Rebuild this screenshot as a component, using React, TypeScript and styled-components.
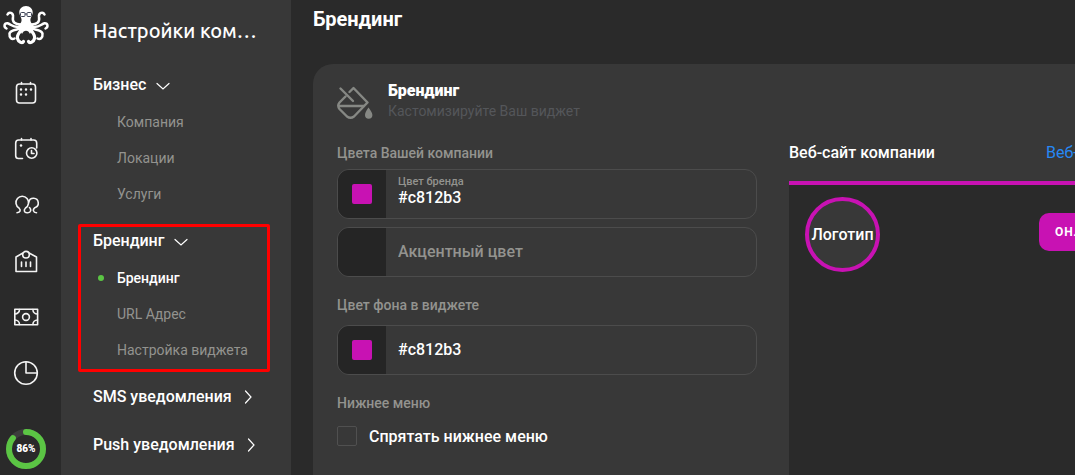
import React from "react";
import styled, { createGlobalStyle, css } from "styled-components";

const brand = "#c812b3";

const GlobalStyle = createGlobalStyle`
  *, *::before, *::after { box-sizing: border-box; }
  body {
    margin: 0;
    height: 100vh;
    overflow: hidden;
    background: #2a2a2a;
    color: #fff;
    font-family: Roboto, "Liberation Sans", sans-serif;
    font-size: 16px;
  }
  button, input { font: inherit; color: inherit; }
  h1, h2, p, ul { margin: 0; padding: 0; }
  ul { list-style: none; }
`;

const Shell = styled.div`
  display: flex;
  height: 100vh;
  overflow: hidden;
`;

const Rail = styled.nav`
  flex: 0 0 61px;
  display: flex;
  flex-direction: column;
  align-items: center;
  padding-right: 9px;
`;

const Logo = styled.a`
  display: block;
  height: 65px;
  padding-top: 4px;
`;

const RailButton = styled.button`
  flex: 0 0 56px;
  width: 52px;
  display: flex;
  align-items: center;
  justify-content: center;
  padding: 0;
  border: 0;
  background: none;
  cursor: pointer;
  svg {
    width: 26px;
    height: 26px;
    fill: none;
    stroke: #f4f4f4;
    stroke-width: 1.6;
    stroke-linecap: round;
    stroke-linejoin: round;
  }
`;

const Progress = styled.div`
  flex: none;
  margin-top: 28px;
  width: 40px;
  height: 40px;
  display: grid;
  place-items: center;
  > * { grid-area: 1 / 1; }
`;

const ProgressValue = styled.span`
  font-size: 10px;
  line-height: 12px;
  font-weight: 900;
`;

const SideMenu = styled.aside`
  flex: 0 0 230px;
  padding: 0 32px;
  background: #383838;
`;

const MenuTitle = styled.h2`
  height: 64px;
  line-height: 62px;
  font-family: Ubuntu, "Noto Sans", sans-serif;
  font-size: 20px;
  font-weight: 500;
  white-space: nowrap;
`;

const Groups = styled.div`
  display: flex;
  flex-direction: column;
  gap: 8px;
`;

const Group = styled.section<{ $marked?: boolean }>`
  position: relative;
  ${(p) =>
    p.$marked &&
    css`
      &::after {
        content: "";
        position: absolute;
        inset: 4px -11px -4px -15px;
        border: 3px solid #ff0000;
        border-radius: 2px;
        pointer-events: none;
      }
    `}
`;

const GroupButton = styled.button`
  display: flex;
  align-items: center;
  gap: 8px;
  height: 40px;
  padding: 0;
  border: 0;
  background: none;
  font-weight: 500;
  white-space: nowrap;
  cursor: pointer;
  svg {
    width: 16px;
    height: 16px;
    fill: none;
    stroke: #fff;
    stroke-width: 1.2;
    stroke-linecap: round;
  }
`;

const SubLink = styled.a<{ $active?: boolean }>`
  display: flex;
  align-items: center;
  height: 36px;
  padding-left: 24px;
  font-size: 14px;
  color: ${(p) => (p.$active ? "#fff" : "#93938f")};
  font-weight: ${(p) => (p.$active ? 500 : 400)};
  text-decoration: none;
  white-space: nowrap;
  ${(p) =>
    p.$active &&
    css`
      padding-left: 5px;
      gap: 13px;
      &::before {
        content: "";
        width: 6px;
        height: 6px;
        border-radius: 50%;
        background: #5bc544;
      }
    `}
`;

const Main = styled.main`
  flex: 1;
  min-width: 0;
  padding-left: 22px;
  overflow: hidden;
`;

const PageTitle = styled.h1`
  height: 64px;
  padding-top: 7px;
  font-size: 20px;
  line-height: 24px;
  font-weight: 700;
`;

const Card = styled.div`
  min-width: 960px;
  min-height: calc(100vh - 64px);
  padding: 16px 24px 24px;
  border-radius: 20px;
  background: #383838;
`;

const CardHeader = styled.header`
  display: flex;
  align-items: center;
  gap: 15px;
  height: 41px;
`;

const CardTitle = styled.h2`
  font-size: 16px;
  line-height: 20px;
  font-weight: 900;
`;

const CardHint = styled.p`
  font-size: 14px;
  line-height: 20px;
  color: #54565a;
`;

const Columns = styled.div`
  display: grid;
  grid-template-columns: 420px 1fr;
  gap: 32px;
  padding-top: 24px;
`;

const Form = styled.form`
  display: flex;
  flex-direction: column;
  gap: 20px;
`;

const Fieldset = styled.div<{ $tight?: boolean }>`
  display: flex;
  flex-direction: column;
  gap: ${(p) => (p.$tight ? 8 : 12)}px;
`;

const Caption = styled.div`
  font-size: 14px;
  line-height: 16px;
  font-weight: 500;
  color: #93938f;
`;

const ColorBox = styled.label`
  display: flex;
  height: 50px;
  border: 1px solid #4c4c4c;
  border-radius: 12px;
  overflow: hidden;
`;

const Swatch = styled.span<{ $color?: string }>`
  flex: 0 0 48px;
  display: grid;
  place-items: center;
  background: #252525;
  &::before {
    content: "";
    width: 20px;
    height: 20px;
    border-radius: 2px;
    background: ${(p) => p.$color || "transparent"};
  }
`;

const FieldBody = styled.span<{ $floating: boolean }>`
  flex: 1;
  display: flex;
  flex-direction: column;
  justify-content: center;
  padding: 0 12px ${(p) => (p.$floating ? 5 : 2)}px;
`;

const FloatLabel = styled.span`
  font-size: 11px;
  line-height: 12px;
  font-weight: 500;
  color: #93938f;
`;

const ColorInput = styled.input`
  width: 100%;
  height: 20px;
  padding: 0;
  border: 0;
  outline: 0;
  background: none;
  font-weight: 500;
  &::placeholder { color: #93938f; opacity: 1; }
`;

const CheckRow = styled.label`
  display: flex;
  align-items: center;
  gap: 12px;
  height: 26px;
  font-weight: 500;
`;

const CheckBox = styled.input`
  appearance: none;
  width: 20px;
  height: 20px;
  margin: 0;
  border: 1px solid #505050;
  border-radius: 2px;
  &:checked { background: ${brand}; }
`;

const PreviewHeader = styled.div`
  display: flex;
  gap: 111px;
  height: 36px;
  line-height: 16px;
  white-space: nowrap;
`;

const PreviewTitle = styled.span`
  font-weight: 500;
`;

const SiteLink = styled.a`
  color: #2688f5;
  text-decoration: none;
`;

const Preview = styled.div`
  display: flex;
  align-items: flex-start;
  gap: 159px;
  min-height: 400px;
  padding: 12px 16px;
  border-top: 4px solid ${brand};
  background: #2a2a2a;
`;

const LogoCircle = styled.div`
  flex: 0 0 75px;
  height: 75px;
  display: flex;
  align-items: center;
  justify-content: center;
  border: 4px solid ${brand};
  border-radius: 50%;
  background: #383838;
  font-weight: 500;
`;

const BookButton = styled.button`
  flex: none;
  height: 38px;
  margin-top: 16px;
  padding: 0 16px;
  border: 0;
  border-radius: 10px;
  background: ${brand};
  font-size: 12px;
  font-weight: 700;
  letter-spacing: 1px;
  white-space: nowrap;
`;

const Octopus = () => (
  <svg width="48" height="42" viewBox="2 4 48 42" role="img" aria-label="Осьминог">
    <g fill="none" stroke="#fff" strokeLinecap="round" strokeLinejoin="round" strokeWidth="2.500">
      <path d="M22 24.500C15 25 12 22 13 17C13.600 12.500 9 11.500 7.500 14.500" />
      <path d="M30 24.500C37 25 40 22 39 17C38.400 12.500 43 11.500 44.500 14.500" />
      <path d="M21 26.500C13 28.500 11 24 7.500 23.200C4 23 3.500 27 6.500 28.500" />
      <path d="M31 26.500C39 28.500 41 24 44.500 23.200C48 23 48.500 27 45.500 28.500" />
      <path d="M21 28C17 30.500 11 29 9.500 33.500C9 38 12 40 14.500 38.500" />
      <path d="M31 28C35 30.500 41 29 42.500 33.500C43 38 40 40 37.500 38.500" />
      <path strokeWidth="3.200" d="M22.500 28C20 32.500 16.500 34.500 17.500 38.500C18.500 42.500 22.500 43.500 23.500 41.500" />
      <path strokeWidth="3.200" d="M29.500 28C32 32.500 35.500 34.500 34.500 38.500C33.500 42.500 29.500 43.500 28.500 41.500" />
    </g>
    <path fill="#fff" d="M26 6C21.800 6 19.200 9 19.300 12.500C19.400 16 22 17.500 21.500 21C21 24 17.500 25 18 28C19.500 31 21.500 32 22 34C23.500 29.500 28.500 29.500 30 34C30.500 32 32.500 31 34 28C34.500 25 31 24 30.500 21C30 17.500 32.600 16 32.700 12.500C32.800 9 30.200 6 26 6Z" />
    <g fill="none" stroke="#3b4154" strokeWidth="1">
      <rect x="20.500" y="12.500" width="4.500" height="4" rx="1" />
      <rect x="27" y="12.500" width="4.500" height="4" rx="1" />
      <path d="M25 14H27" />
    </g>
  </svg>
);

const PaintBucket = () => (
  <svg width="36" height="38" viewBox="0 -4 36 38" fill="none" stroke="#868884" strokeWidth="2.400" strokeLinecap="round" strokeLinejoin="round">
    <path d="M3.500 2.500L16 15" />
    <path d="M12.500 6L16.500 2L30.500 16.500L17 30.500Q13.500 33 10 30.500L2.500 23Q0 19.500 2.500 16.500L8.500 10.500" />
    <path d="M2 20H27" />
    <path fill="#868884" stroke="none" d="M31.500 21.500C29.500 24.500 28 26.500 28 29A3.700 3.700 0 0 0 35.400 29C35.400 26.500 33.500 24.500 31.500 21.500Z" />
  </svg>
);

const railIcons: { name: string; art: React.ReactNode }[] = [
  {
    name: "Календарь",
    art: (
      <>
        <rect x="3.500" y="4" width="19" height="19" rx="3" />
        <path d="M8.500 2.500V4M17.500 2.500V4" />
        <path strokeWidth="2.500" d="M8 9.500H8.010M13 9.500H13.010M18 9.500H18.010M8 14.500H8.010M13 14.500H13.010" />
      </>
    ),
  },
  {
    name: "Записи",
    art: (
      <>
        <path d="M9.500 22.500H5.500A2.800 2.800 0 0 1 2.700 19.700V7A3 3 0 0 1 5.700 4H20.700A3 3 0 0 1 23.700 7V12" />
        <path d="M8.500 2.500V4M18 2.500V4" />
        <path strokeWidth="2.500" d="M8 9.500H8.010" />
        <circle cx="18.700" cy="17" r="5.200" />
        <path d="M18.500 14.500V17.500H21" />
      </>
    ),
  },
  {
    name: "Клиенты",
    art: (
      <>
        <path d="M4 20.700C7.500 20.700 8 18 6 16A6.300 6.300 0 1 1 12.500 16C10.500 18 11 20.700 14 20.700" />
        <path d="M15.800 10A4.800 4.800 0 1 1 21.800 15.700C19.500 17.500 20 20.700 23.500 20.700M16.500 15.500C18.500 17.500 18 20.700 14.800 20.700" />
      </>
    ),
  },
  {
    name: "Услуги",
    art: (
      <>
        <path d="M9.500 5.200L3 9V23.500H23.500V9L16.500 5.200" />
        <circle cx="13" cy="6.700" r="3.300" />
        <path d="M8.500 14V18.500M13 14V18.500M17.500 14V18.500" />
      </>
    ),
  },
  {
    name: "Финансы",
    art: (
      <>
        <rect x="1.800" y="5.200" width="22.800" height="15.600" />
        <circle cx="13" cy="13" r="3.400" />
        <path d="M6.500 5.500A4.500 4.500 0 0 1 2 10M19.900 5.500A4.500 4.500 0 0 0 24.400 10M2 16A4.500 4.500 0 0 1 6.500 20.500M24.400 16A4.500 4.500 0 0 0 19.900 20.500" />
      </>
    ),
  },
  {
    name: "Отчёты",
    art: (
      <>
        <circle cx="13" cy="13" r="11.300" />
        <path d="M13 2V13H24" />
      </>
    ),
  },
];

const Chevron = ({ open }: { open?: boolean }) => (
  <svg viewBox="0 0 16 16">
    <path d={open ? "M3 7.500L9 13L15 7.500" : "M5.500 3L11 9L5.500 15"} />
  </svg>
);

type MenuGroup = { title: string; items: string[]; marked?: boolean };

const menu: MenuGroup[] = [
  { title: "Бизнес", items: ["Компания", "Локации", "Услуги"] },
  { title: "Брендинг", items: ["Брендинг", "URL Адрес", "Настройка виджета"], marked: true },
  { title: "SMS уведомления", items: [] },
  { title: "Push уведомления", items: [] },
];

const ColorField = ({ name, label, value }: { name: string; label?: string; value?: string }) => (
  <ColorBox>
    <Swatch $color={value} />
    <FieldBody $floating={Boolean(label)}>
      {label && <FloatLabel>{label}</FloatLabel>}
      <ColorInput aria-label={name} placeholder={name} defaultValue={value} />
    </FieldBody>
  </ColorBox>
);

export default function App() {
  return (
    <>
      <GlobalStyle />
      <Shell>
        <Rail>
          <Logo href="#"><Octopus /></Logo>
          {railIcons.map((icon) => (
            <RailButton key={icon.name} aria-label={icon.name}>
              <svg viewBox="0 0 26 26">{icon.art}</svg>
            </RailButton>
          ))}
          <Progress>
            <svg width="40" height="40" viewBox="0 0 40 40" fill="none" strokeWidth="6">
              <circle cx="20" cy="20" r="17" stroke="#3d3d3d" />
              <circle cx="20" cy="20" r="17" stroke="#5bc544" strokeLinecap="round" pathLength="100" strokeDasharray="86 100" transform="rotate(-90 20 20)" />
            </svg>
            <ProgressValue>86%</ProgressValue>
          </Progress>
        </Rail>

        <SideMenu>
          <MenuTitle>Настройки ком…</MenuTitle>
          <Groups>
            {menu.map((group) => (
              <Group key={group.title} $marked={group.marked}>
                <GroupButton>
                  {group.title}
                  <Chevron open={group.items.length > 0} />
                </GroupButton>
                {group.items.length > 0 && (
                  <ul>
                    {group.items.map((item) => (
                      <li key={item}>
                        <SubLink href="#" $active={item === "Брендинг"}>{item}</SubLink>
                      </li>
                    ))}
                  </ul>
                )}
              </Group>
            ))}
          </Groups>
        </SideMenu>

        <Main>
          <PageTitle>Брендинг</PageTitle>
          <Card>
            <CardHeader>
              <PaintBucket />
              <div>
                <CardTitle>Брендинг</CardTitle>
                <CardHint>Кастомизируйте Ваш виджет</CardHint>
              </div>
            </CardHeader>
            <Columns>
              <Form>
                <Fieldset $tight>
                  <Caption>Цвета Вашей компании</Caption>
                  <ColorField name="Цвет бренда" label="Цвет бренда" value={brand} />
                  <ColorField name="Акцентный цвет" />
                </Fieldset>
                <Fieldset>
                  <Caption>Цвет фона в виджете</Caption>
                  <ColorField name="Цвет фона в виджете" value={brand} />
                </Fieldset>
                <Fieldset>
                  <Caption>Нижнее меню</Caption>
                  <CheckRow>
                    <CheckBox type="checkbox" />
                    Спрятать нижнее меню
                  </CheckRow>
                </Fieldset>
              </Form>
              <section>
                <PreviewHeader>
                  <PreviewTitle>Веб-сайт компании</PreviewTitle>
                  <SiteLink href="#">Веб-сайт</SiteLink>
                </PreviewHeader>
                <Preview>
                  <LogoCircle>Логотип</LogoCircle>
                  <BookButton>ОНЛАЙН</BookButton>
                </Preview>
              </section>
            </Columns>
          </Card>
        </Main>
      </Shell>
    </>
  );
}
